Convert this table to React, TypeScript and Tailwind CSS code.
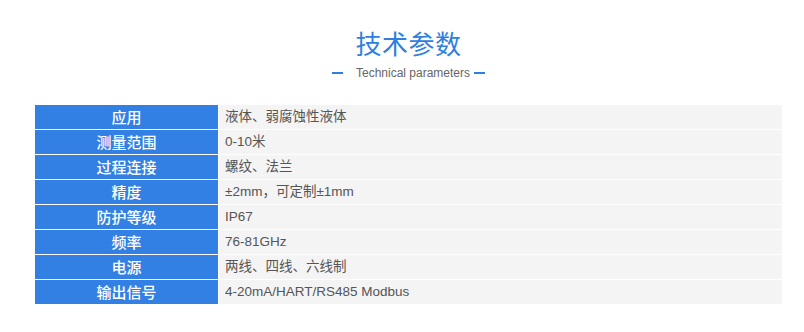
import React from "react";

const rows: [string, string][] = [
  ["应用", "液体、弱腐蚀性液体"],
  ["测量范围", "0-10米"],
  ["过程连接", "螺纹、法兰"],
  ["精度", "±2mm，可定制±1mm"],
  ["防护等级", "IP67"],
  ["频率", "76-81GHz"],
  ["电源", "两线、四线、六线制"],
  ["输出信号", "4-20mA/HART/RS485 Modbus"],
];

export default function App() {
  return (
    <div
      className="w-[804px] h-[332px] bg-white"
      style={{ fontFamily: '"Liberation Sans", "Noto Sans CJK SC", sans-serif' }}
    >
      <div className="ml-[35px] w-[747px]">
        <div className="pt-[26px] flex flex-col items-center">
          <div className="text-[26px] leading-[34px] text-[#2f7fe0] tracking-[0.5px]" style={{ fontFamily: '"Noto Sans CJK SC", sans-serif' }}>
            技术参数
          </div>
          <div className="mt-[5px] flex items-center text-[12px] leading-[16px] text-[#666]">
            <span className="w-[11px] h-[2px] bg-[#2f7fe0]" />
            <span className="ml-[13px] mr-[4px]">Technical parameters</span>
            <span className="w-[11px] h-[2px] bg-[#2f7fe0]" />
          </div>
        </div>
        <div className="mt-[24px] flex flex-col gap-[1px]">
          {rows.map(([k, v]) => (
            <div key={k} className="flex h-[24px] gap-[1px]">
              <div className="w-[183px] bg-[#3380e4] text-white text-[15px] font-medium flex items-center justify-center" style={{ fontFamily: '"Noto Sans CJK SC", sans-serif' }}>
                {k}
              </div>
              <div className="flex-1 bg-[#f4f4f4] text-[#555] text-[13.5px] flex items-center pl-[6px]">
                {v}
              </div>
            </div>
          ))}
        </div>
      </div>
    </div>
  );
}
